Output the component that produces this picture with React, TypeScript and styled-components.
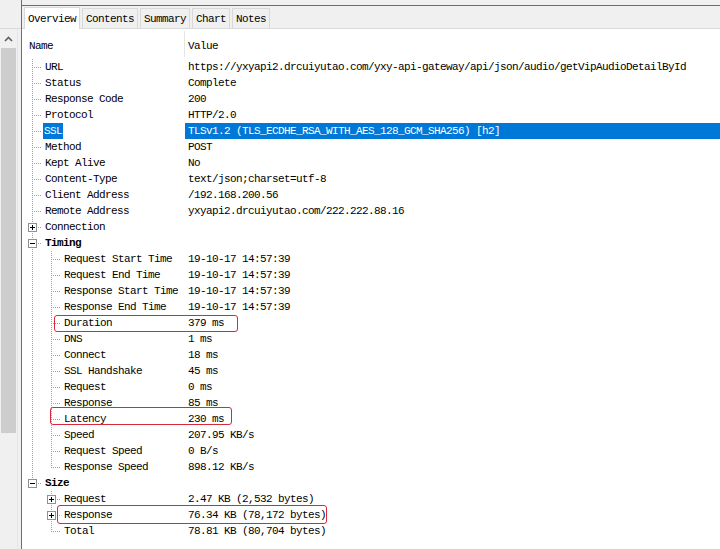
import styled, { createGlobalStyle } from "styled-components";

const GlobalStyle = createGlobalStyle`
  html, body { margin: 0; padding: 0; background: #ffffff; }
  body {
    font-family: "Liberation Mono", "DejaVu Sans Mono", monospace;
    font-size: 11px;
    color: #000;
  }
`;

const DOT = "#a0a0a0";
const HILITE = "#0078d7";

type Gut = "none" | "pass" | "mid" | "last";

interface Row {
  name: string;
  value?: string;
  guts: Gut[];
  box?: "+" | "-";
  bold?: boolean;
  selected?: boolean;
  mark?: { left: number; top: number; width: number; height: number };
}

const rows: Row[] = [
  { name: "URL", value: "https://yxyapi2.drcuiyutao.com/yxy-api-gateway/api/json/audio/getVipAudioDetailById", guts: ["mid"] },
  { name: "Status", value: "Complete", guts: ["mid"] },
  { name: "Response Code", value: "200", guts: ["mid"] },
  { name: "Protocol", value: "HTTP/2.0", guts: ["mid"] },
  { name: "SSL", value: "TLSv1.2 (TLS_ECDHE_RSA_WITH_AES_128_GCM_SHA256) [h2]", guts: ["mid"], selected: true },
  { name: "Method", value: "POST", guts: ["mid"] },
  { name: "Kept Alive", value: "No", guts: ["mid"] },
  { name: "Content-Type", value: "text/json;charset=utf-8", guts: ["mid"] },
  { name: "Client Address", value: "/192.168.200.56", guts: ["mid"] },
  { name: "Remote Address", value: "yxyapi2.drcuiyutao.com/222.222.88.16", guts: ["mid"] },
  { name: "Connection", guts: ["mid"], box: "+" },
  { name: "Timing", guts: ["mid"], box: "-", bold: true },
  { name: "Request Start Time", value: "19-10-17 14:57:39", guts: ["pass", "mid"] },
  { name: "Request End Time", value: "19-10-17 14:57:39", guts: ["pass", "mid"] },
  { name: "Response Start Time", value: "19-10-17 14:57:39", guts: ["pass", "mid"] },
  { name: "Response End Time", value: "19-10-17 14:57:39", guts: ["pass", "mid"] },
  { name: "Duration", value: "379 ms", guts: ["pass", "mid"], mark: { left: 32, top: 0, width: 184, height: 17 } },
  { name: "DNS", value: "1 ms", guts: ["pass", "mid"] },
  { name: "Connect", value: "18 ms", guts: ["pass", "mid"] },
  { name: "SSL Handshake", value: "45 ms", guts: ["pass", "mid"] },
  { name: "Request", value: "0 ms", guts: ["pass", "mid"] },
  { name: "Response", value: "85 ms", guts: ["pass", "mid"] },
  { name: "Latency", value: "230 ms", guts: ["pass", "mid"], mark: { left: 28, top: -4, width: 182, height: 18 } },
  { name: "Speed", value: "207.95 KB/s", guts: ["pass", "mid"] },
  { name: "Request Speed", value: "0 B/s", guts: ["pass", "mid"] },
  { name: "Response Speed", value: "898.12 KB/s", guts: ["pass", "last"] },
  { name: "Size", guts: ["last"], box: "-", bold: true },
  { name: "Request", value: "2.47 KB (2,532 bytes)", guts: ["none", "mid"], box: "+" },
  { name: "Response", value: "76.34 KB (78,172 bytes)", guts: ["none", "mid"], box: "+", mark: { left: 35, top: -2, width: 270, height: 19 } },
  { name: "Total", value: "78.81 KB (80,704 bytes)", guts: ["none", "last"] },
];

const Window = styled.div`
  display: flex;
  width: 720px;
  height: 549px;
  overflow: hidden;
  background: #fff;
`;

const SidePane = styled.div`
  width: 21px;
  flex-shrink: 0;
  background: #f0f0f0;
  border-right: 1px solid #6d6d6d;
  display: flex;
  flex-direction: column;
`;

const SideTop = styled.div`
  height: 28px;
  border-bottom: 1px solid #dadada;
`;

const ScrollTrack = styled.div`
  width: 17px;
  flex: 1;
  display: flex;
  flex-direction: column;
  align-items: center;
  background: #f0f0f0;
  border-right: 1px solid #e6e6e6;
`;

const ArrowUp = styled.div`
  height: 19px;
  display: flex;
  align-items: center;
  justify-content: center;
  width: 100%;
`;

const Thumb = styled.div`
  width: 15px;
  height: 385px;
  background: #cdcdcd;
`;

const MainPane = styled.div`
  flex: 1;
  display: flex;
  flex-direction: column;
  min-width: 0;
`;

const TopStrip = styled.div`
  height: 5px;
  background: #f0f0f0;
  border-bottom: 1px solid #6d6d6d;
`;

const TabBar = styled.div`
  height: 22px;
  display: flex;
  align-items: flex-end;
  padding-left: 2px;
  gap: 2px;
  background: #f0f0f0;
  border-bottom: 1px solid #d9d9d9;
`;

const Tab = styled.div<{ $active?: boolean }>`
  height: ${(p) => (p.$active ? "22px" : "20px")};
  padding: 0 3px;
  display: flex;
  align-items: center;
  font-size: 11px;
  letter-spacing: -0.6px;
  background: ${(p) => (p.$active ? "#ffffff" : "#f0f0f0")};
  border: 1px solid #d9d9d9;
  border-bottom: none;
  box-sizing: border-box;
  margin-bottom: ${(p) => (p.$active ? "-1px" : "0")};
`;

const Header = styled.div`
  height: 30px;
  display: flex;
  align-items: stretch;
`;

const HeadCell = styled.div<{ $w?: number }>`
  ${(p) => (p.$w ? `width: ${p.$w}px; flex-shrink: 0;` : "flex: 1;")}
  padding: 3px 0 0 ${(p) => (p.$w ? 7 : 3)}px;
  box-sizing: border-box;
  display: flex;
  align-items: center;
  letter-spacing: -0.6px;
  border-right: ${(p) => (p.$w ? "1px solid #e5e5e5" : "none")};
  margin: 2px 0;
`;

const List = styled.div`
  display: flex;
  flex-direction: column;
`;

const RowLine = styled.div`
  position: relative;
  height: 16px;
  display: flex;
  align-items: stretch;
`;

const NameCell = styled.div`
  width: 163px;
  flex-shrink: 0;
  display: flex;
  align-items: stretch;
  padding-left: 1px;
  box-sizing: border-box;
  white-space: nowrap;
`;

const vLine = `repeating-linear-gradient(to bottom, ${DOT} 0 1px, transparent 1px 2px)`;
const hLine = `repeating-linear-gradient(to right, ${DOT} 0 1px, transparent 1px 2px)`;

const Gutter = styled.div<{ $kind: Gut }>`
  width: 19px;
  flex-shrink: 0;
  display: flex;
  align-items: center;
  padding-left: 5px;
  box-sizing: border-box;
  background-repeat: no-repeat;
  ${(p) => {
    switch (p.$kind) {
      case "pass":
        return `background-image: ${vLine}; background-size: 1px 100%; background-position: 9px 0;`;
      case "mid":
        return `background-image: ${vLine}, ${hLine};
          background-size: 1px 100%, 10px 1px;
          background-position: 9px 0, 9px 8px;`;
      case "last":
        return `background-image: ${vLine}, ${hLine};
          background-size: 1px 9px, 10px 1px;
          background-position: 9px 0, 9px 8px;`;
      default:
        return "";
    }
  }}
`;

const Expander = styled.div<{ $plus?: boolean }>`
  width: 9px;
  height: 9px;
  box-sizing: border-box;
  border: 1px solid #919191;
  background-color: #fff;
  background-repeat: no-repeat;
  background-image: linear-gradient(#000, #000)${(p) => (p.$plus ? ", linear-gradient(#000, #000)" : "")};
  background-size: 5px 1px${(p) => (p.$plus ? ", 1px 5px" : "")};
  background-position: 1px 3px${(p) => (p.$plus ? ", 3px 1px" : "")};
`;

const Label = styled.span<{ $bold?: boolean; $selected?: boolean }>`
  padding: 0 1px;
  display: flex;
  align-items: center;
  letter-spacing: -0.6px;
  font-weight: ${(p) => (p.$bold ? 700 : 400)};
  background: ${(p) => (p.$selected ? HILITE : "transparent")};
  color: ${(p) => (p.$selected ? "#fff" : "#000")};
  margin-left: ${(p) => (p.$selected ? "1px" : "2px")};
`;

const ValueCell = styled.div<{ $selected?: boolean }>`
  flex: 1;
  display: flex;
  align-items: center;
  padding-left: 3px;
  white-space: nowrap;
  letter-spacing: -0.6px;
  background: ${(p) => (p.$selected ? HILITE : "transparent")};
  color: ${(p) => (p.$selected ? "#fff" : "#000")};
`;

const Mark = styled.div`
  position: absolute;
  border: 1.5px solid #d8283c;
  border-radius: 3px;
  box-sizing: border-box;
  pointer-events: none;
`;

export default function App() {
  return (
    <>
      <GlobalStyle />
      <Window>
        <SidePane>
          <SideTop />
          <ScrollTrack>
            <ArrowUp>
              <svg width="9" height="6" viewBox="0 0 9 6">
                <path d="M1 5 L4.5 1.5 L8 5" fill="none" stroke="#606060" strokeWidth="1.6" />
              </svg>
            </ArrowUp>
            <Thumb />
          </ScrollTrack>
        </SidePane>
        <MainPane>
          <TopStrip />
          <TabBar>
            <Tab $active>Overview</Tab>
            <Tab>Contents</Tab>
            <Tab>Summary</Tab>
            <Tab>Chart</Tab>
            <Tab>Notes</Tab>
          </TabBar>
          <Header>
            <HeadCell $w={163}>Name</HeadCell>
            <HeadCell>Value</HeadCell>
          </Header>
          <List>
            {rows.map((r, i) => (
              <RowLine key={i}>
                <NameCell>
                  {r.guts.map((g, j) => (
                    <Gutter key={j} $kind={g}>
                      {r.box && j === r.guts.length - 1 && <Expander $plus={r.box === "+"} />}
                    </Gutter>
                  ))}
                  <Label $bold={r.bold} $selected={r.selected}>
                    {r.name}
                  </Label>
                </NameCell>
                <ValueCell $selected={r.selected}>{r.value}</ValueCell>
                {r.mark && (
                  <Mark
                    style={{
                      left: r.mark.left,
                      top: r.mark.top,
                      width: r.mark.width,
                      height: r.mark.height,
                    }}
                  />
                )}
              </RowLine>
            ))}
          </List>
        </MainPane>
      </Window>
    </>
  );
}
